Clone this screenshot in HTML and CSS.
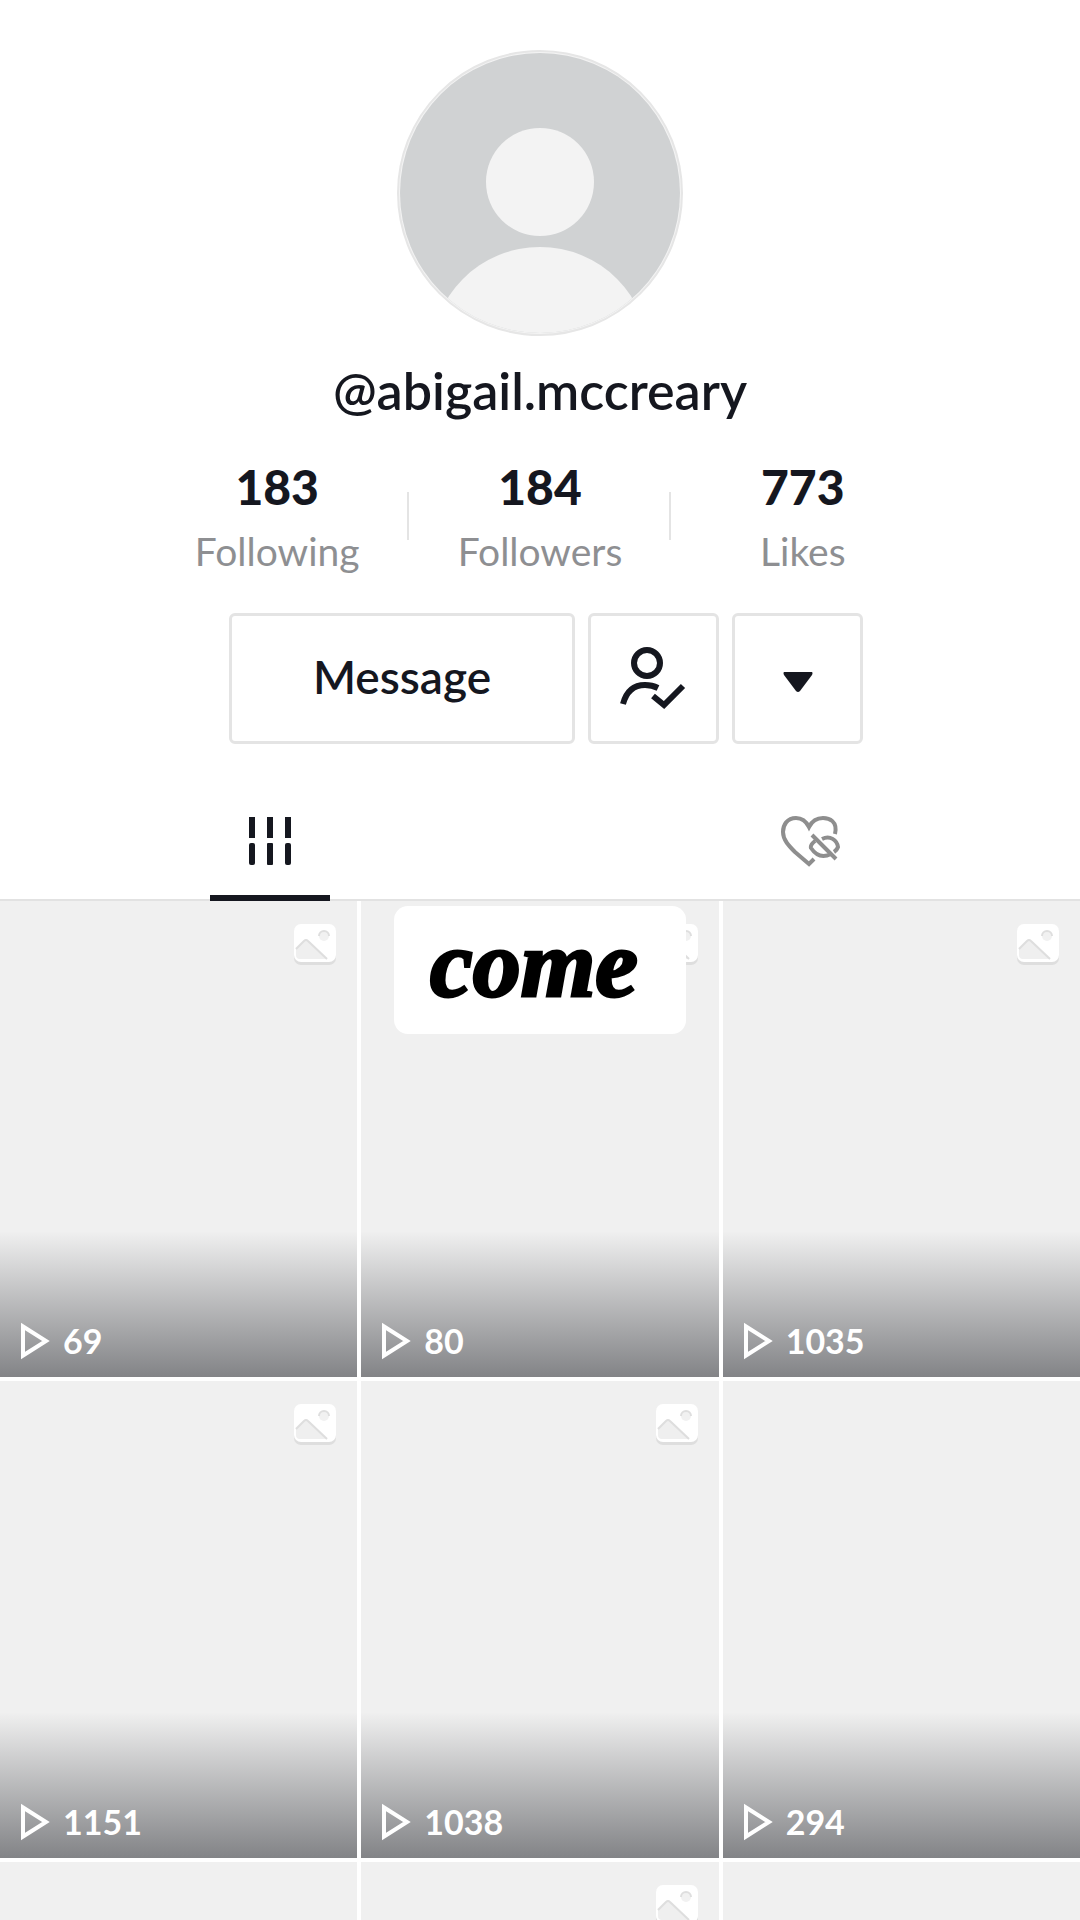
FILE: index.html
```html
<!DOCTYPE html>
<html lang="en">
<head>
<meta charset="utf-8">
<meta name="viewport" content="width=device-width, initial-scale=1">
<title>@abigail.mccreary</title>
<link rel="stylesheet" href="styles.css">
</head>
<body>
<svg class="sprite" aria-hidden="true">
  <symbol id="play" viewBox="0 0 30 38">
    <path d="M3 4.500V33.500L26 19Z" fill="none" stroke="#fff" stroke-width="4"/>
  </symbol>
  <symbol id="photo" viewBox="0 0 44 44">
    <rect x="1" y="4" width="42" height="39" rx="7" fill="#dedede"/>
    <rect x="1" y="2" width="42" height="38" rx="7" fill="#fff"/>
    <path d="M3 27L11 19Q13 17 15 19L34 37H7Q3 37 3 33Z" fill="#efefef"/>
    <path d="M3 27L11 19Q13 17 15 19L34 37" fill="none" stroke="#dedede" stroke-width="2"/>
    <circle cx="31" cy="14" r="5" fill="#f1f1f1"/>
    <path d="M26 14a5 5 0 0 1 10 0" fill="none" stroke="#dedede" stroke-width="2"/>
  </symbol>
</svg>
<main class="page">
  <header class="profile">
    <svg class="avatar" viewBox="0 0 286 286" role="img" aria-label="Profile picture">
      <defs><clipPath id="round"><circle cx="143" cy="143" r="140"/></clipPath></defs>
      <circle cx="143" cy="143" r="142" fill="#f3f3f3" stroke="#e6e6e6" stroke-width="2"/>
      <g clip-path="url(#round)">
        <rect width="286" height="286" fill="#d0d2d3"/>
        <circle cx="143" cy="132" r="54" fill="#f3f3f3"/>
        <circle cx="143" cy="306" r="109" fill="#f3f3f3"/>
      </g>
    </svg>
    <h1 class="handle">@abigail.mccreary</h1>
    <ul class="stats">
      <li class="stat"><strong class="count">183</strong><span class="label">Following</span></li>
      <li class="stat"><strong class="count">184</strong><span class="label">Followers</span></li>
      <li class="stat"><strong class="count">773</strong><span class="label">Likes</span></li>
    </ul>
    <div class="actions">
      <button class="btn message" type="button">Message</button>
      <button class="btn" type="button" aria-label="Following">
        <svg width="68" height="64" viewBox="0 0 68 64" fill="none" stroke="#15171f" stroke-width="6">
          <ellipse cx="27" cy="16" rx="13" ry="13"/>
          <path d="M3 57Q8 38 25 38Q32 38 38 41" />
          <path d="M33 49L44 58L63 39"/>
        </svg>
      </button>
      <button class="btn" type="button" aria-label="More">
        <svg width="30" height="26" viewBox="0 0 30 26"><path d="M1 6H29Q30 7 29 9L17 25Q15 27 13 25L1 9Q0 7 1 6Z" fill="#15171f"/></svg>
      </button>
    </div>
  </header>
  <nav class="tabs">
    <a class="tab active" href="#videos" aria-label="Videos">
      <svg width="46" height="50" viewBox="0 0 46 50" fill="#15171f">
        <path d="M2 1h6v21h-6zM20 1h6v21h-6zM38 1h6v21h-6z"/>
        <rect x="2" y="27" width="6" height="22" rx="2"/><rect x="20" y="27" width="6" height="22" rx="1"/><rect x="38" y="27" width="6" height="22" rx="2"/>
      </svg>
    </a>
    <a class="tab" href="#liked" aria-label="Liked">
      <svg width="60" height="52" viewBox="0 0 60 52" fill="none" stroke="#8e8e8e" stroke-width="4">
        <path d="M55 19C58 6 49 3 43 3C36 3 32 6 29 12C26 6 22 3 16 3C7 3 3 10 3 17C3 25 9 31 15 37L29 49L34 44"/>
        <path d="M42 24C50 20 57 25 58 32Q57 35 54 37M35 26Q30 30 31 33Q39 45 51 39M32 20L56 44"/>
      </svg>
    </a>
  </nav>
  <section class="feed" id="videos">
    <div class="grid">
      <a class="tile" href="#v1"><svg class="badge"><use href="#photo"/></svg><span class="views"><svg class="play"><use href="#play"/></svg>69</span></a>
      <a class="tile" href="#v2"><svg class="badge"><use href="#photo"/></svg><span class="views"><svg class="play"><use href="#play"/></svg>80</span></a>
      <a class="tile" href="#v3"><svg class="badge"><use href="#photo"/></svg><span class="views"><svg class="play"><use href="#play"/></svg>1035</span></a>
      <a class="tile" href="#v4"><svg class="badge"><use href="#photo"/></svg><span class="views"><svg class="play"><use href="#play"/></svg>1151</span></a>
      <a class="tile" href="#v5"><svg class="badge"><use href="#photo"/></svg><span class="views"><svg class="play"><use href="#play"/></svg>1038</span></a>
      <a class="tile" href="#v6"><span class="views"><svg class="play"><use href="#play"/></svg>294</span></a>
      <a class="tile" href="#v7" aria-label="Video"></a>
      <a class="tile" href="#v8" aria-label="Photo"><svg class="badge"><use href="#photo"/></svg></a>
      <a class="tile" href="#v9" aria-label="Video"></a>
    </div>
    <p class="caption">come</p>
  </section>
</main>
</body>
</html>
```
FILE: styles.css
```css
* { box-sizing: border-box; }
body {
  margin: 0;
  background: #fff;
  color: #15171f;
  font-family: Lato, "Open Sans", sans-serif;
}
svg { display: block; }
.sprite { position: absolute; width: 0; height: 0; }
.page {
  height: 100vh;
  overflow-x: hidden;
  overflow-y: auto;
  scrollbar-width: none;
}
.profile {
  display: flex;
  flex-direction: column;
  align-items: center;
  padding-top: 50px;
}
.avatar { width: 286px; height: 286px; }
.handle {
  margin: 22px 0 0;
  font-size: 52px;
  font-weight: 600;
  line-height: 64px;
}
.stats {
  display: grid;
  grid-template-columns: repeat(3, 1fr);
  width: 73%;
  margin: 33px 0 0;
  padding: 0;
  list-style: none;
}
.stat {
  display: flex;
  flex-direction: column;
  align-items: center;
  gap: 8px;
  background: linear-gradient(#e4e4e4, #e4e4e4) right 37px / 2px 48px no-repeat;
}
.stat:last-child { background: none; }
.count { font-size: 48px; font-weight: 900; line-height: 64px; }
.label { font-size: 39px; line-height: 48px; color: #8e8f92; }
.actions {
  display: flex;
  gap: 13px;
  margin: 38px 0 0 12px;
}
.btn {
  display: flex;
  align-items: center;
  justify-content: center;
  width: 131px;
  height: 131px;
  padding: 0;
  border: 3px solid #e4e4e4;
  border-radius: 6px;
  background: #fff;
  color: #15171f;
  font: 600 46px/56px Lato, "Open Sans", sans-serif;
}
.message { width: 346px; padding-bottom: 4px; }
.tabs {
  display: grid;
  grid-template-columns: 1fr 1fr;
  margin-top: 37px;
  border-bottom: 2px solid #e2e2e2;
}
.tab {
  display: flex;
  justify-content: center;
  align-items: center;
  justify-self: center;
  width: 120px;
  height: 120px;
  padding-top: 6px;
  margin-bottom: -2px;
  border-bottom: 6px solid transparent;
}
.tab.active { border-bottom-color: #15171f; }
.feed { position: relative; }
.grid {
  display: grid;
  grid-template-columns: repeat(3, 1fr);
  gap: 4px;
}
.tile {
  display: flex;
  flex-direction: column;
  justify-content: space-between;
  aspect-ratio: 3 / 4;
  background: #f0f0f0;
  color: #fff;
  text-decoration: none;
}
.badge {
  align-self: flex-end;
  width: 44px;
  height: 44px;
  margin: 21px 20px 0 0;
}
.views {
  display: flex;
  align-items: flex-end;
  gap: 13px;
  height: 146px;
  margin-top: auto;
  padding: 0 20px 17px;
  background: linear-gradient(rgba(22, 24, 30, 0), rgba(22, 24, 30, 0.5));
  font-size: 34px;
  font-weight: 700;
  line-height: 38px;
}
.play { width: 30px; height: 38px; }
.caption {
  position: absolute;
  top: 5px;
  left: 50%;
  transform: translateX(-50%);
  margin: 0;
  padding: 0 48px 12px 36px;
  border-radius: 14px;
  background: #fff;
  color: #000;
  font: italic 700 96px/116px "Liberation Serif", serif;
  -webkit-text-stroke: 3px #000;
}
```
